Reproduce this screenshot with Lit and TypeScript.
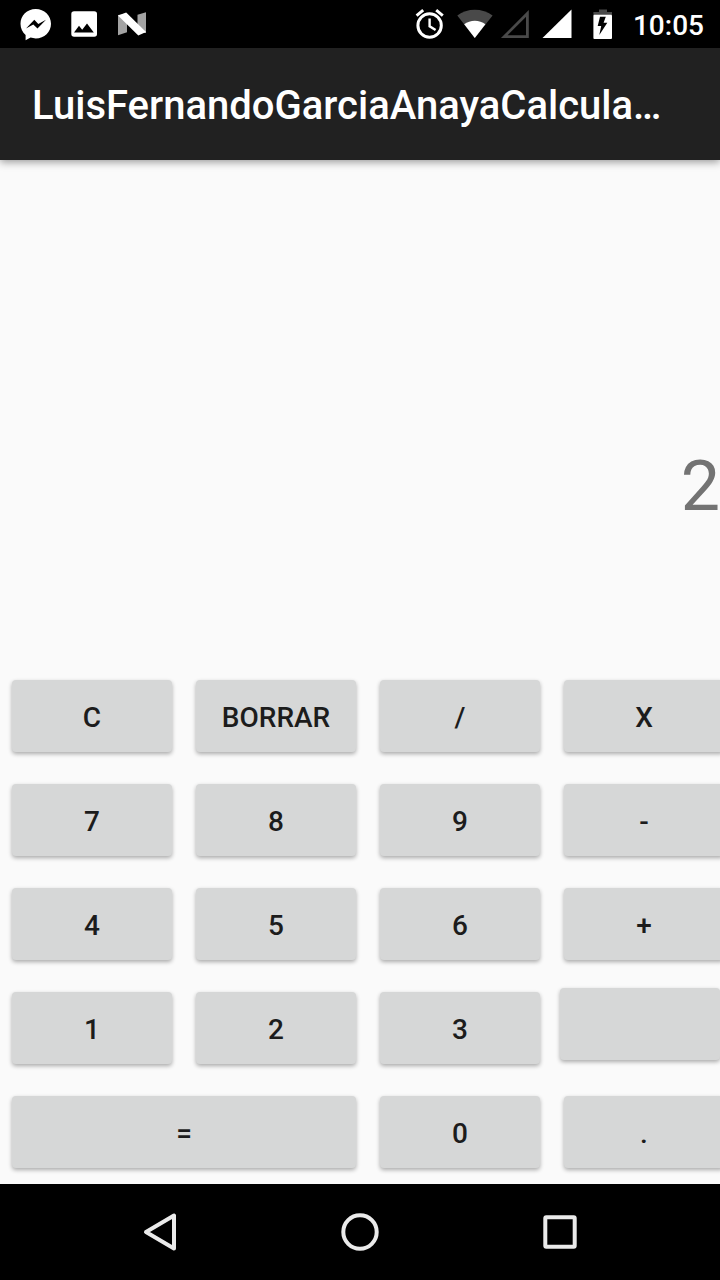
import { LitElement, html, svg, css, nothing } from "lit";
import { customElement, property, state } from "lit/decorators.js";

interface Key {
  label: string;
  wide?: boolean;
  flush?: boolean;
}

const KEYS: Key[] = [
  { label: "C" }, { label: "BORRAR" }, { label: "/" }, { label: "X" },
  { label: "7" }, { label: "8" }, { label: "9" }, { label: "-" },
  { label: "4" }, { label: "5" }, { label: "6" }, { label: "+" },
  { label: "1" }, { label: "2" }, { label: "3" }, { label: "", flush: true },
  { label: "=", wide: true }, { label: "0" }, { label: "." },
];

@customElement("status-bar")
class StatusBar extends LitElement {
  static styles = css`
    :host {
      display: flex;
      justify-content: space-between;
      height: 48px;
      padding: 0 16px 0 20px;
      background: #000;
      color: #fff;
    }
    .group {
      display: flex;
      align-items: center;
    }
    .notices {
      gap: 16px;
    }
    svg {
      display: block;
      flex: none;
    }
    .time {
      margin-left: 5px;
      padding-top: 4px;
      font-size: 28px;
      font-weight: 500;
      line-height: 32px;
    }
  `;

  private notice(label: string, shape: unknown) {
    return html`<svg width="32" height="48" viewBox="0 0 32 48" role="img" aria-label=${label}>${shape}</svg>`;
  }

  private signal(label: string, shape: unknown) {
    return html`<svg width="44" height="48" viewBox="0 0 44 48" role="img" aria-label=${label}>${shape}</svg>`;
  }

  render() {
    return html`
      <div class="group notices">
        ${this.notice("Messenger", svg`
          <path fill="#fff" d="M15.7 9C24.4 9 31 15.400 31 23.700S24.400 38.400 15.700 38.400C13.900 38.400 12.200 38.100 10.600 37.600L5.600 40.200V34.900C2.400 32.200 .5 28.300 .5 23.700C.5 15.400 7 9 15.700 9Z"/>
          <path d="M6 28.400L14.300 19.800L18.300 23.900L26 19.800L17.500 28.600L13.300 24.500Z"/>`)}
        ${this.notice("Imagen", svg`
          <rect x="3.300" y="11.300" width="25.700" height="25.500" rx="2.800" fill="#fff"/>
          <path d="M6 32.500L11 25.700L14.200 29.700L19 23.400L25.800 32.500Z"/>`)}
        ${this.notice("Android", svg`
          <path fill="#a3a3a3" d="M2 15L11 14V32.300L2 35.200ZM21.500 14.800L30 12.300V33H21.500Z"/>
          <path fill="#fff" d="M2 15.600L10.200 12.500L30 32L22.300 35.400Z"/>`)}
      </div>
      <div class="group">
        ${this.signal("Alarma", svg`
          <g fill="none" stroke="#fff" stroke-width="3">
            <circle cx="21.600" cy="25.500" r="11.700"/>
            <path d="M8.600 15.600L15.200 10.200M28.200 10.200L34.800 15.600"/>
            <path stroke-width="2.400" d="M21.600 18.500V26.300L27.600 30"/>
          </g>`)}
        ${this.signal("Wi-Fi", svg`
          <path fill="#494949" d="M22.800 38L5.300 15.600C15 7.800 30.600 7.800 40.600 15.600Z"/>
          <path fill="#fff" d="M22.800 38L12.200 24.300C18 19.500 27.600 19.500 33.400 24.300Z"/>`)}
        ${this.signal("Sin señal", svg`
          <path fill="none" stroke="#494949" stroke-width="2.800" d="M8.300 36.600H31.400V13.400Z"/>`)}
        ${this.signal("Señal", svg`<path fill="#fff" d="M2.500 38H31.500V9.500Z"/>`)}
        ${this.signal("Cargando", svg`
          <path fill="#494949" d="M15 9.400H23V12H28V15H9.400V12H15Z"/>
          <rect x="9.400" y="14.700" width="18.600" height="24.200" rx="1" fill="#fff"/>
          <path d="M16 16.700H21.800L19.600 22.700H23.300L15.300 35L17.200 25.900H13.700Z"/>`)}
        <time class="time" datetime="10:05">10:05</time>
      </div>
    `;
  }
}

@customElement("calc-keypad")
class CalcKeypad extends LitElement {
  @property({ attribute: false }) keys: Key[] = [];

  static styles = css`
    :host {
      display: block;
      overflow: hidden;
    }
    /* The fourth column runs past the right edge of the screen. */
    .grid {
      display: grid;
      grid-template-columns: repeat(4, minmax(0, 1fr));
      grid-auto-rows: 104px;
      width: calc(100% + 16px);
    }
    .key {
      margin: 16px 12px;
      padding: 4px 0 0;
      border: 0;
      border-radius: 4px;
      background: #d6d7d7;
      color: #1c1c1c;
      box-shadow: 0 2px 4px rgba(0, 0, 0, 0.32);
      font: 500 28px/32px Roboto, sans-serif;
      cursor: pointer;
    }
    .key:active {
      background: #c4c5c5;
    }
    .wide {
      grid-column: span 2;
    }
    .flush {
      margin: 12px 16px 20px 8px;
    }
  `;

  private press(key: Key) {
    this.dispatchEvent(new CustomEvent("key-press", { detail: key.label }));
  }

  render() {
    return html`
      <div class="grid">
        ${this.keys.map((key) => html`<button
          type="button"
          class="key ${key.wide ? "wide" : ""} ${key.flush ? "flush" : ""}"
          aria-label=${key.label ? nothing : "Vacío"}
          @click=${() => this.press(key)}
        >${key.label}</button>`)}
      </div>
    `;
  }
}

@customElement("nav-bar")
class NavBar extends LitElement {
  static styles = css`
    :host {
      display: flex;
      justify-content: center;
      height: 96px;
      background: #000;
    }
    .nav {
      display: flex;
      align-items: center;
      justify-content: center;
      width: 200px;
      padding: 0;
      border: 0;
      background: none;
    }
    svg {
      fill: none;
      stroke: #ebebeb;
      stroke-width: 4;
      stroke-linejoin: round;
    }
  `;

  render() {
    return html`
      <button type="button" class="nav" aria-label="Atrás">
        <svg width="48" height="48" viewBox="0 0 48 48"><path d="M10 24L38 7.500V40.500Z"/></svg>
      </button>
      <button type="button" class="nav" aria-label="Inicio">
        <svg width="48" height="48" viewBox="0 0 48 48"><circle cx="24" cy="24" r="16.700"/></svg>
      </button>
      <button type="button" class="nav" aria-label="Recientes">
        <svg width="48" height="48" viewBox="0 0 48 48"><rect x="9.300" y="9.300" width="29.400" height="29.400" rx="1"/></svg>
      </button>
    `;
  }
}

@customElement("app-root")
class AppRoot extends LitElement {
  @state() private value = "2";

  static styles = css`
    :host {
      display: flex;
      flex-direction: column;
      min-height: 100vh;
      background: #fafafa;
      font-family: Roboto, sans-serif;
    }
    .appbar {
      display: flex;
      align-items: center;
      height: 112px;
      padding: 0 32px;
      background: #212121;
      color: #fff;
      box-shadow: 0 2px 8px rgba(0, 0, 0, 0.4);
    }
    .title {
      margin: 0;
      padding-top: 4px;
      overflow: hidden;
      text-overflow: ellipsis;
      white-space: nowrap;
      font-size: 40px;
      font-weight: 500;
      line-height: 48px;
    }
    .display {
      display: flex;
      flex: 1;
      align-items: flex-end;
      justify-content: flex-end;
      padding-bottom: 136px;
    }
    .value {
      color: #737373;
      font-size: 70px;
      line-height: 84px;
    }
  `;

  private onKey(event: CustomEvent<string>) {
    const label = event.detail;
    if (label === "C") {
      this.value = "";
    } else if (label === "BORRAR") {
      this.value = this.value.slice(0, -1);
    } else if (label !== "=") {
      this.value += label;
    }
  }

  render() {
    return html`
      <status-bar></status-bar>
      <header class="appbar">
        <h1 class="title">LuisFernandoGarciaAnayaCalcula…</h1>
      </header>
      <main class="display">
        <output class="value">${this.value}</output>
      </main>
      <calc-keypad .keys=${KEYS} @key-press=${this.onKey}></calc-keypad>
      <nav-bar></nav-bar>
    `;
  }
}
